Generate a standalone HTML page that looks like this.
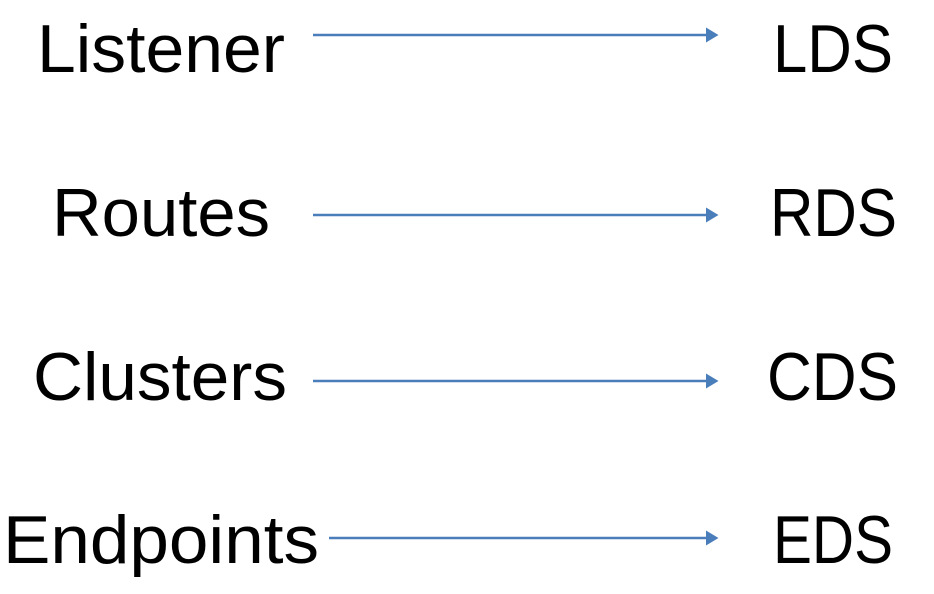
<!DOCTYPE html>
<html><head><style>html,body{margin:0;padding:0;background:#fff}svg{display:block}</style></head><body>
<svg width="934" height="594" xmlns="http://www.w3.org/2000/svg">
<defs><marker id="a" markerWidth="6" markerHeight="6" refX="4" refY="3" orient="auto" markerUnits="strokeWidth"><path d="M0,0 L5,3 L0,6 z" fill="#4a7ebb"/></marker></defs>
<g font-family="Liberation Sans, sans-serif" font-size="68" fill="#000">
<text x="37" y="72" textLength="248" lengthAdjust="spacingAndGlyphs">Listener</text>
<text x="52" y="236" textLength="218" lengthAdjust="spacingAndGlyphs">Routes</text>
<text x="33" y="400" textLength="254" lengthAdjust="spacingAndGlyphs">Clusters</text>
<text x="3" y="563" textLength="316" lengthAdjust="spacingAndGlyphs">Endpoints</text>
<text x="773" y="72" textLength="120" lengthAdjust="spacingAndGlyphs">LDS</text>
<text x="770" y="236" textLength="127" lengthAdjust="spacingAndGlyphs">RDS</text>
<text x="767" y="400" textLength="131" lengthAdjust="spacingAndGlyphs">CDS</text>
<text x="773" y="563" textLength="120" lengthAdjust="spacingAndGlyphs">EDS</text>
</g>
<g stroke="#4a7ebb" stroke-width="2.5" marker-end="url(#a)">
<line x1="313" y1="35" x2="716" y2="35"/>
<line x1="313" y1="215" x2="716" y2="215"/>
<line x1="313" y1="381" x2="716" y2="381"/>
<line x1="329" y1="538" x2="716" y2="538"/>
</g>
</svg>
</body></html>
